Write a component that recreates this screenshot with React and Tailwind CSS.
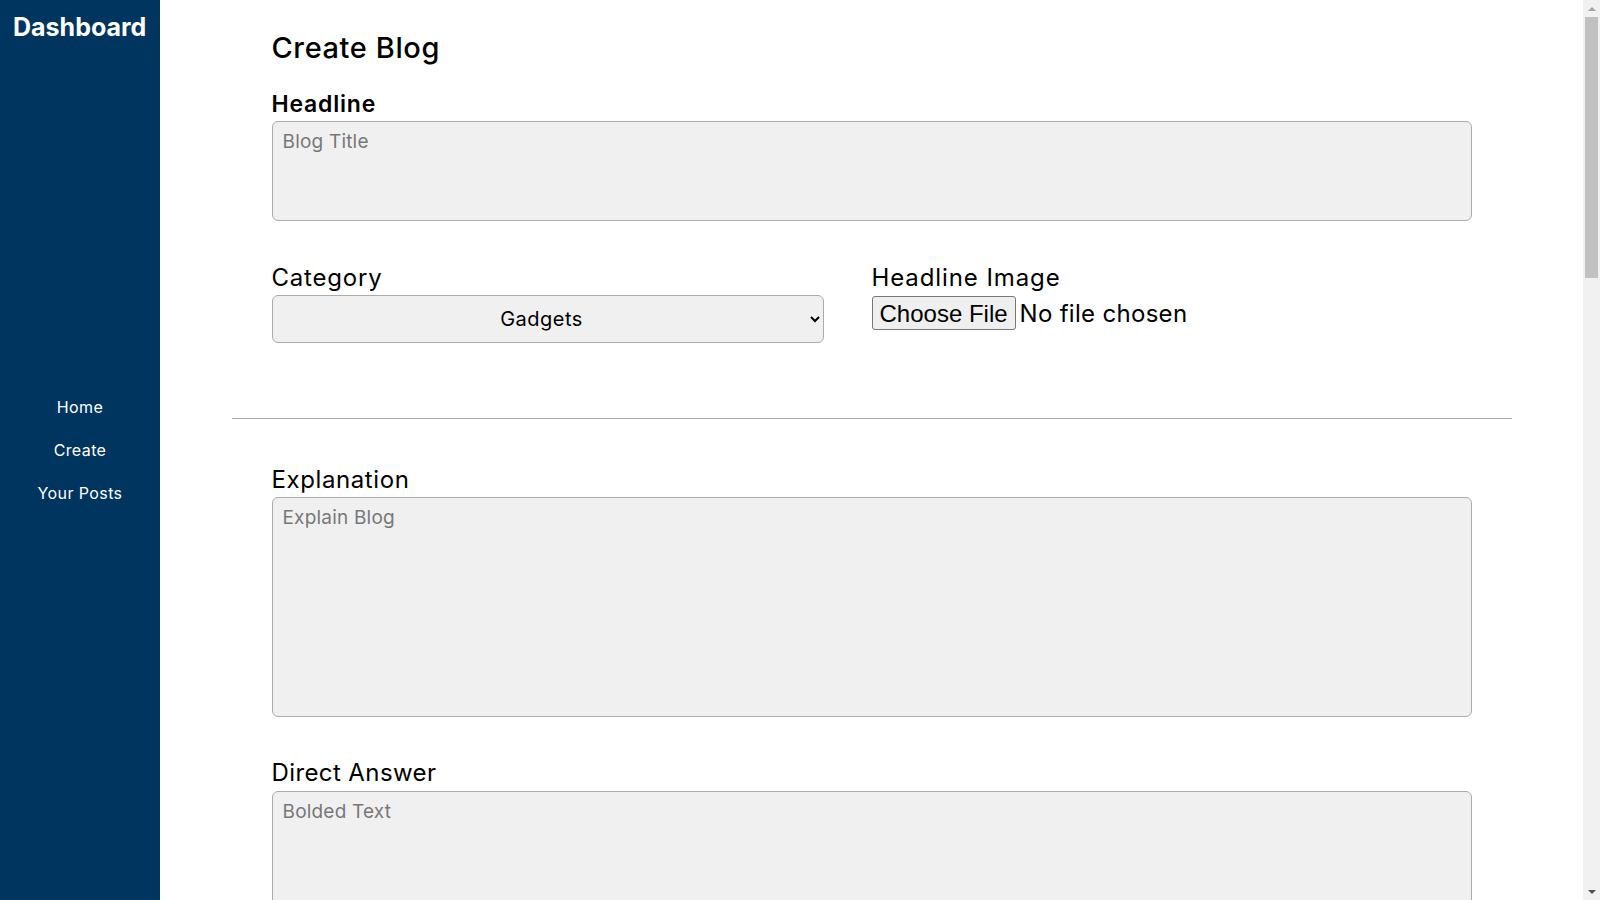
import { useState } from 'react';

// Sidebar = navy column with the brand and centered nav links
function Sidebar() {
    return (
        <aside className="w-[160px] shrink-0 h-screen bg-[#003560] text-white flex flex-col">
            <div className="h-[55px] px-[13px] pt-[11px]">
                <span className="text-[25px] leading-[32px] font-bold">Dashboard</span>
            </div>
            <nav className="flex-1 flex flex-col items-center justify-center gap-[19px] text-[16px] leading-[24px] tracking-[0.4px]">
                <a href="#" className="hover:underline">Home</a>
                <a href="#" className="hover:underline">Create</a>
                <a href="#" className="hover:underline">Your Posts</a>
            </nav>
            <div className="h-[55px]" />
        </aside>
    );
}

// ScrollRail = the page scrollbar as it shows in the window
function ScrollRail() {
    return (
        <div className="w-[17px] shrink-0 h-screen bg-[#f1f1f1] flex flex-col items-center">
            <div className="h-[17px] flex items-center justify-center">
                <svg width="8" height="4" viewBox="0 0 8 4"><polygon points="4,0 8,4 0,4" fill="#a3a3a3" /></svg>
            </div>
            <div className="w-[13px] h-[261px] bg-[#c1c1c1]" />
            <div className="flex-1" />
            <div className="h-[17px] flex items-center justify-center">
                <svg width="8" height="4" viewBox="0 0 8 4"><polygon points="0,0 8,0 4,4" fill="#505050" /></svg>
            </div>
        </div>
    );
}

const fieldBox =
    'block w-full bg-[#f0f0f0] border border-[#acacac] rounded-[6px] px-[10px] py-[6px] text-[19px] leading-[28px] tracking-[0.2px] resize-none outline-none placeholder:text-[#787878]';

export default function App() {
    const [category, setCategory] = useState('Gadgets');

    return (
        <div className="h-screen flex bg-white text-black font-['Inter','Liberation_Sans',sans-serif]">
            <Sidebar />

            {/* main column scrolls on its own */}
            <main className="flex-1 h-screen overflow-y-auto [scrollbar-width:none]">
                <div className="min-h-[2990px]">
                    <div className="w-[1200px] mx-auto">
                        <h1 className="mt-[30px] text-[29px] leading-[36px] font-medium tracking-[0.6px]">Create Blog</h1>

                        {/* Headline */}
                        <label className="block mt-[24px] text-[23px] leading-[28px] font-semibold tracking-[0.8px]">Headline</label>
                        <textarea className={`${fieldBox} mt-[3px] h-[100px]`} placeholder="Blog Title" />

                        {/* Category + image */}
                        <div className="grid grid-cols-2 mt-[41px]">
                            <div>
                                <label className="block text-[24px] leading-[32px] tracking-[0.8px]">Category</label>
                                <select
                                    value={category}
                                    onChange={(e) => setCategory(e.target.value)}
                                    className="mt-[1px] w-[552px] h-[48px] bg-[#f0f0f0] border border-[#acacac] rounded-[6px] px-[8px] text-[20px] tracking-[0.5px] text-center [text-align-last:center]">
                                    <option>Gadgets</option>
                                    <option>Technology</option>
                                    <option>Lifestyle</option>
                                    <option>Travel</option>
                                </select>
                            </div>
                            <div>
                                <label className="block text-[24px] leading-[32px] tracking-[0.9px]">Headline Image</label>
                                <input
                                    type="file"
                                    className="mt-[2px] text-[24px] leading-[34px] tracking-[0.3px] file:mr-[4px] file:h-[34px] file:px-[7px] file:bg-[#efefef] file:border file:border-[#767676] file:rounded-[3px] file:font-['Liberation_Sans'] file:text-[24px] file:tracking-normal"
                                />
                            </div>
                        </div>
                    </div>

                    <hr className="w-[1280px] mx-auto mt-[75px] border-t border-[#ababab]" />

                    <div className="w-[1200px] mx-auto">
                        {/* Explanation */}
                        <label className="block mt-[45px] text-[24px] leading-[32px] tracking-[0.6px]">Explanation</label>
                        <textarea className={`${fieldBox} mt-[1px] h-[220px]`} placeholder="Explain Blog" />

                        {/* Direct answer */}
                        <label className="block mt-[40px] text-[24px] leading-[32px] tracking-[0.4px]">Direct Answer</label>
                        <textarea className={`${fieldBox} mt-[2px] h-[220px]`} placeholder="Bolded Text" />
                    </div>
                </div>
            </main>

            <ScrollRail />
        </div>
    );
}
